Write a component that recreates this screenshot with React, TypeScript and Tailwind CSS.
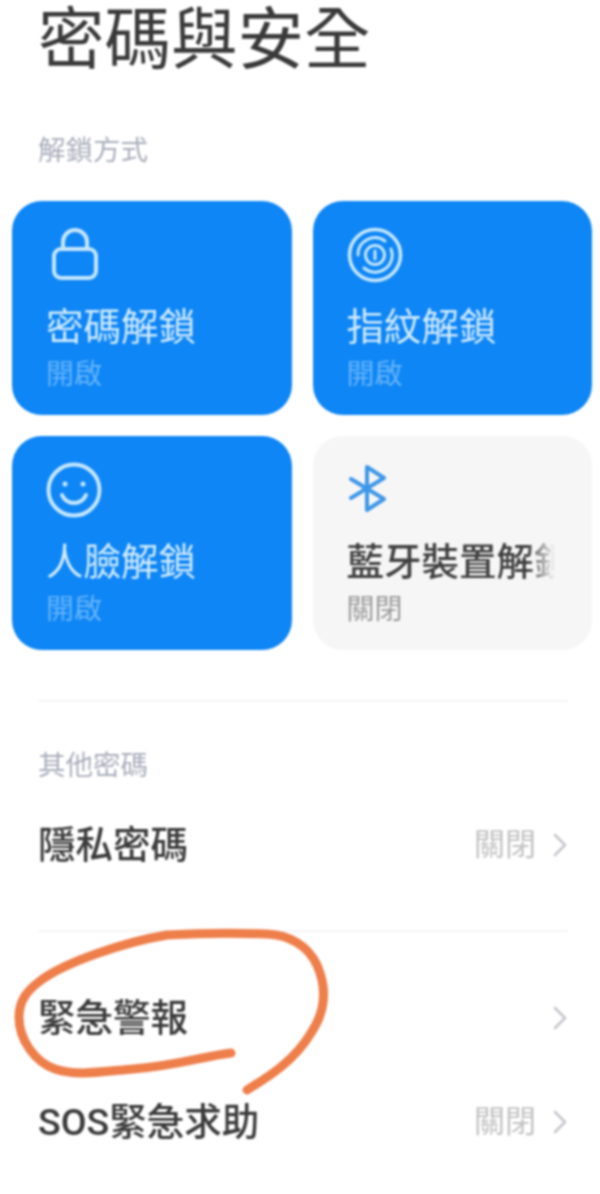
const cjk = "font-['Roboto','Noto_Sans_CJK_TC',sans-serif]";

function LockIcon() {
  return (
    <svg className="ml-[5px]" width="48" height="54" viewBox="0 0 48 54" fill="none" stroke="#c4e6ff" strokeWidth="4">
      <rect x="3" y="22" width="42" height="29" rx="7" />
      <path d="M12 22v-7a12 12 0 0 1 24 0v7" />
    </svg>
  );
}

function FingerprintIcon() {
  return (
    <svg width="56" height="56" viewBox="0 0 56 56" fill="none" stroke="#c4e6ff" strokeWidth="3" strokeLinecap="round">
      <circle cx="28" cy="28" r="25.5" strokeWidth="3.6" />
      <path d="M11 28a17 17 0 0 1 27-14" />
      <path d="M44 22a17 17 0 0 1-27 19" />
      <circle cx="28" cy="28" r="9.5" />
      <path d="M28 24v8" />
    </svg>
  );
}

function SmileIcon() {
  return (
    <svg width="56" height="56" viewBox="0 0 56 56" fill="none" stroke="#c4e6ff" strokeWidth="4" strokeLinecap="round">
      <circle cx="28" cy="28" r="25.5" />
      <circle cx="19" cy="22" r="2.5" fill="#c4e6ff" stroke="none" />
      <circle cx="37" cy="22" r="2.5" fill="#c4e6ff" stroke="none" />
      <path d="M16 33a13 13 0 0 0 24 0" />
    </svg>
  );
}

function BluetoothIcon() {
  return (
    <svg className="ml-[1px] mt-[2px]" width="40" height="48" viewBox="0 0 40 48" fill="none" stroke="#3e97e6" strokeWidth="4" strokeLinejoin="round" strokeLinecap="round">
      <path d="M3 15 36 35 19 46V3l17 11L3 34" />
    </svg>
  );
}

function Chevron() {
  return (
    <svg width="16" height="26" viewBox="0 0 16 26" fill="none" stroke="#c4c6ca" strokeWidth="2.5" strokeLinecap="round" strokeLinejoin="round">
      <path d="M3 3l10 10L3 23" />
    </svg>
  );
}

function UnlockCard({ icon, title, status, on, faded }: { icon: React.ReactNode; title: string; status: string; on: boolean; faded?: boolean }) {
  return (
    <div className={`relative h-[214px] rounded-[30px] pl-[34px] overflow-hidden ${on ? "bg-[#0f86f5]" : "bg-[#f6f6f7]"}`}>
      <div className="h-[86px] pt-[26px] flex items-start">{icon}</div>
      <div className={`mt-[16px] text-[37.5px] leading-[48px] whitespace-nowrap ${on ? "text-[#cfeaff]" : "text-[#3f3f40] font-medium"}`}>{title}</div>
      <div className={`mt-[2px] text-[28px] leading-[44px] ${on ? "text-[#64b4fa]" : "text-[#9b9b9c]"}`}>{status}</div>
      {faded && <div className="absolute left-[214px] right-0 top-0 bottom-0 bg-gradient-to-r from-transparent to-[#f6f6f7] to-[28px]" />}
    </div>
  );
}

function SettingRow({ label, value, className }: { label: string; value?: string; className: string }) {
  return (
    <div className={`flex items-center justify-between ${className}`}>
      <span className="text-[37.5px] leading-[48px] text-[#3a3a3b] font-medium">{label}</span>
      <span className="flex items-center gap-[16px]">
        {value && <span className="text-[31px] leading-[48px] text-[#c2c2c3]">{value}</span>}
        <Chevron />
      </span>
    </div>
  );
}

export default function App() {
  return (
    <div className={`relative w-[600px] h-[1194px] overflow-hidden bg-white ${cjk} blur-[1px]`}>
      <div className="pl-[38px] pt-[7px] text-[66.5px] leading-[66px] text-[#3a3a3b]">密碼與安全</div>
      <div className="pl-[38px] mt-[63px] text-[27.5px] leading-[30px] text-[#a9aebb]">解鎖方式</div>

      <div className="mt-[35px] pl-[12px] pr-[8px] grid grid-cols-2 gap-x-[21px] gap-y-[21px]">
        <UnlockCard icon={<LockIcon />} title="密碼解鎖" status="開啟" on />
        <UnlockCard icon={<FingerprintIcon />} title="指紋解鎖" status="開啟" on />
        <UnlockCard icon={<SmileIcon />} title="人臉解鎖" status="開啟" on />
        <UnlockCard icon={<BluetoothIcon />} title="藍牙裝置解鎖" status="關閉" on={false} faded />
      </div>

      <div className="mx-[38px] mr-[32px] mt-[50px] border-t-2 border-[#f5f5f6]" />
      <div className="pl-[38px] mt-[49px] text-[27.5px] leading-[30px] text-[#a9aebb]">其他密碼</div>

      <SettingRow label="隱私密碼" value="關閉" className="mt-[40px] pl-[38px] pr-[32px]" />
      <div className="mx-[38px] mr-[32px] mt-[61px] border-t-2 border-[#f5f5f6]" />
      <SettingRow label="緊急警報" className="mt-[62px] pl-[38px] pr-[32px]" />
      <SettingRow label="SOS緊急求助" value="關閉" className="mt-[56px] pl-[38px] pr-[32px]" />

      {/* hand-drawn circle around the highlighted row */}
      <svg className="absolute inset-0 pointer-events-none" width="600" height="1194" fill="none">
        <path
          d="M231 1053C200 1057 175 1066 133 1069C100 1072 75 1076 55 1069C35 1062 19 1040 19 1017C19 1000 28 990 40 981C65 962 125 942 167 935C200 933 240 933 267 934C290 935 308 946 317 965C328 990 325 1012 311 1033C295 1060 270 1076 247 1090"
          stroke="#ee7f4b"
          strokeWidth="9"
          strokeLinecap="round"
        />
      </svg>
    </div>
  );
}
